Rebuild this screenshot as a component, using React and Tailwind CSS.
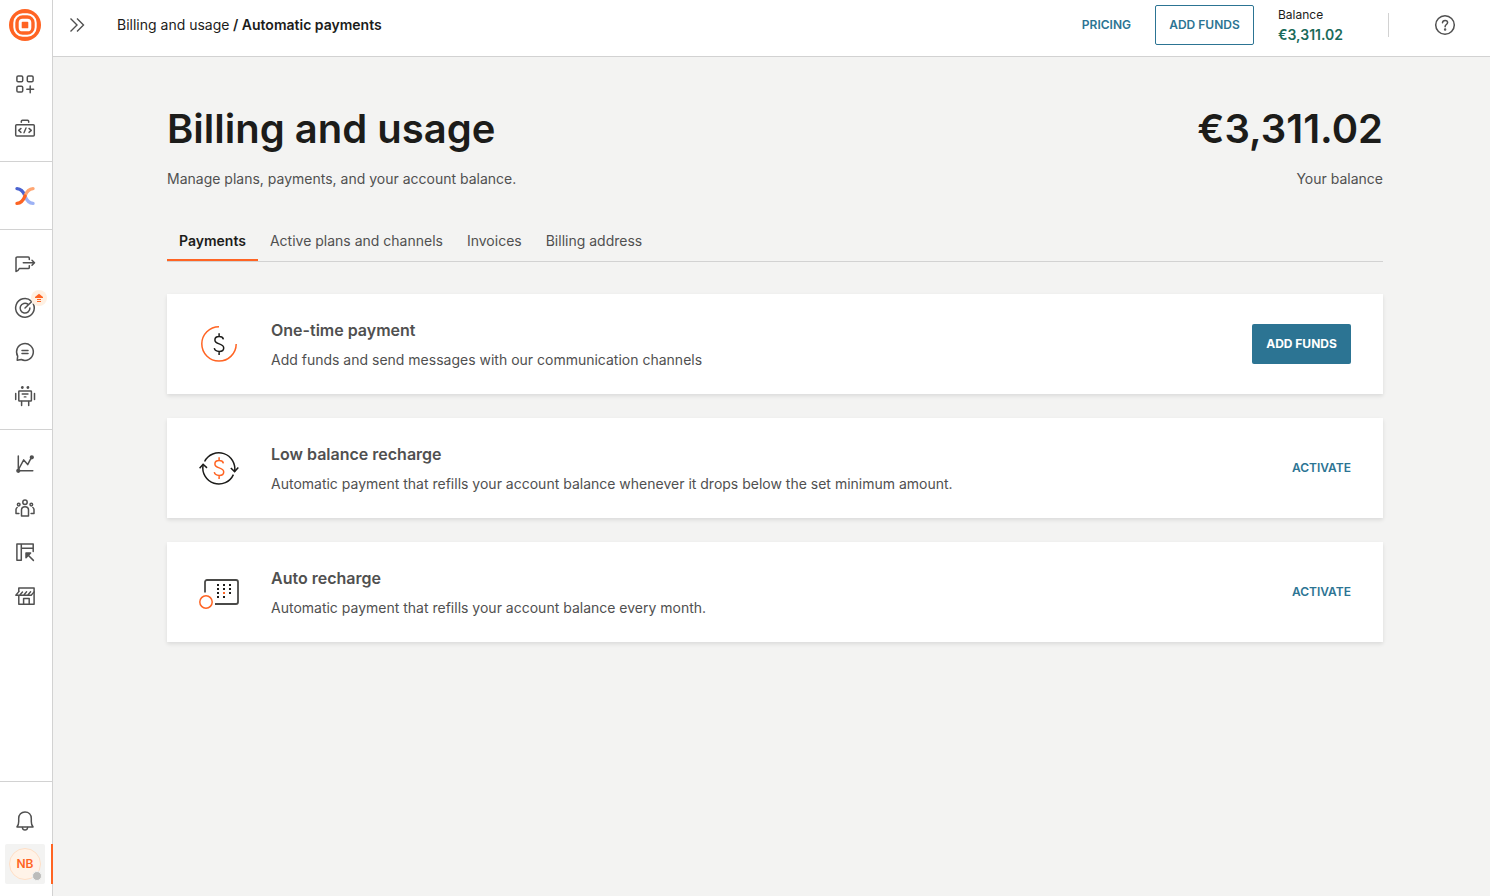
import { useState } from "react";

const Icon = ({ children }) => (
  <svg
    viewBox="0 0 24 24"
    className="w-6 h-6 shrink-0"
    fill="none"
    stroke="currentColor"
    strokeWidth="1.5"
    strokeLinecap="round"
    strokeLinejoin="round"
    aria-hidden="true"
  >
    {children}
  </svg>
);

const AppsIcon = () => (
  <Icon>
    <rect x="3.9" y="3.9" width="5.8" height="5.8" rx="1.3" />
    <rect x="14.3" y="3.9" width="5.8" height="5.8" rx="1.3" />
    <rect x="3.9" y="14.3" width="5.8" height="5.8" rx="1.3" />
    <path d="M17.2 13.9v6.8M13.8 17.3h6.8" />
  </Icon>
);

const DevToolsIcon = () => (
  <Icon>
    <rect x="2.7" y="8.7" width="18.6" height="11.4" rx="1" />
    <path d="M8.3 6.2V5.4c0-.7.4-1.1 1.1-1.1h5.2c.7 0 1.1.4 1.1 1.1v.8" />
    <path d="M8 12.4l-2.3 2 2.3 2M16 12.4l2.3 2-2.3 2M13 12l-2 4.8" strokeWidth="1.4" />
  </Icon>
);

const ExchangeIcon = () => (
  <svg viewBox="0 0 24 24" className="w-6 h-6" fill="none" strokeWidth="3.4" strokeLinecap="round" aria-hidden="true">
    <path d="M4 4.6c4.6.2 6.4 3 8 7.4" stroke="#4a63d0" />
    <path d="M12 12c1.6 4.4 3.4 7.2 8 7.4" stroke="#9db2f5" />
    <path d="M12 12c1.6-4.4 3.4-7.2 8-7.4" stroke="#ffa672" />
    <path d="M4 19.4c4.6-.2 6.4-3 8-7.4" stroke="#fc6423" />
  </svg>
);

const MomentsIcon = () => (
  <Icon>
    <path d="M16.3 7.6V6.2c0-.7-.4-1.1-1.1-1.1H4.2c-.7 0-1.2.4-1.2 1.1v13.2c1.5-.2 2.6-1.1 3.3-2.9h8.9c.7 0 1.1-.4 1.1-1.1v-1.6" />
    <path d="M10.3 10.8h11M19 8.3l2.5 2.5-2.5 2.5" />
  </Icon>
);

const TargetIcon = () => (
  <Icon>
    <path d="M18.3 5.1A9.3 9.3 0 1 0 20.3 7.8" />
    <path d="M14.9 8.2A4.9 4.9 0 1 0 16.9 12" />
    <path d="M12 12l6.6-6.3" />
  </Icon>
);

const ChatIcon = () => (
  <Icon>
    <path d="M4.2 20.2l.5-4a8.4 8.4 0 1 1 3.6 3.3z" />
    <path d="M9 10.6h6M9 13.4h6" />
  </Icon>
);

const RobotIcon = () => (
  <Icon>
    <rect x="5.8" y="7" width="12.6" height="10" rx=".6" />
    <path d="M8.6 17.5v4M15.7 17.5v4M2.7 9.5v6M21.5 9.5v6" />
    <path d="M9.2 10h5.8M11.3 12.9h1.6" strokeWidth="1.4" />
    <circle cx="9.3" cy="3.5" r=".7" fill="currentColor" />
    <circle cx="14.9" cy="3.5" r=".7" fill="currentColor" />
  </Icon>
);

const ChartIcon = () => (
  <Icon>
    <path d="M5.3 3.9v14.9h14.5M5.5 17.5l5.2-9.6 4 4.7 3.6-7" />
    <circle cx="5.3" cy="18.8" r="1.4" fill="currentColor" />
    <circle cx="18.8" cy="5.3" r="1.4" fill="currentColor" />
  </Icon>
);

const PeopleIcon = () => (
  <Icon>
    <circle cx="12" cy="6.2" r="2.2" />
    <path d="M8.5 20v-6c0-2.1 1.3-3.3 3.5-3.3s3.5 1.2 3.5 3.3v6z" />
    <circle cx="5.7" cy="8.6" r="1.3" />
    <circle cx="18.3" cy="8.6" r="1.3" />
    <path d="M5.9 17.4H3v-3.6c0-1 .3-1.7 1.1-2.3M18.1 17.4H21v-3.6c0-1-.3-1.7-1.1-2.3" />
  </Icon>
);

const BoardIcon = () => (
  <Icon>
    <path d="M3.9 3.9h16.3v7.7M3.9 3.9v16.3h4.4V3.9M8.3 8.3h11.9" />
    <path d="M15.5 15.5l4.9 4.9" />
    <path d="M13 13h4.6L13 17.6z" fill="currentColor" />
  </Icon>
);

const ShopIcon = () => (
  <Icon>
    <path d="M5.8 7.5V3.9h15.3v16.3H5.8v-8.4" />
    <path d="M10.6 20v-5.4h5.6V20" />
    <path
      d="M5.8 7.6l-3 3.7h3.8L9.5 8M6.6 11.3h4l3-3.5M10.6 11.3h4l3-3.5M14.6 11.3h3.6l2.9-3.4"
      strokeWidth="1.4"
    />
  </Icon>
);

const BellIcon = () => (
  <Icon>
    <path d="M4 18.9c1.3-1.3 1.7-3 1.7-5.5v-3C5.7 6.6 8.3 3.9 12 3.9s6.3 2.7 6.3 6.5v3c0 2.5.4 4.2 1.7 5.5z" />
    <path d="M9.4 19.5c.2 1.7 1.2 2.6 2.6 2.6s2.4-.9 2.6-2.6" />
  </Icon>
);

const Logo = () => (
  <svg viewBox="0 0 32 32" className="w-8 h-8" fill="none" aria-hidden="true">
    <circle cx="16" cy="16" r="16" fill="#ff6423" />
    <rect x="5.3" y="5.3" width="21.4" height="21.4" rx="8.4" stroke="#fff" strokeWidth="2" />
    <rect x="11.2" y="11.2" width="9.6" height="9.6" rx="2.4" stroke="#fff" strokeWidth="3" />
  </svg>
);

const Dollar = ({ color }) => (
  <path
    d="M24.4 15.3c-.4-1.7-2-2.7-4.3-2.7-2.5 0-4.2 1.3-4.2 3.4 0 2.4 2 3.2 4.3 3.9 2.5.8 4.5 1.6 4.5 4 0 2.2-1.9 3.5-4.5 3.5-2.7 0-4.5-1.2-4.9-3.2M20.1 9.3v3.3M20.1 27.4v3.5"
    stroke={color}
  />
);

const CardIcon = ({ children }) => (
  <svg viewBox="0 0 40 40" className="w-10 h-10 shrink-0" fill="none" strokeWidth="1.5" aria-hidden="true">
    {children}
  </svg>
);

const OneTimeIcon = () => (
  <CardIcon>
    <path d="M20 2.7A17.2 17.2 0 1 0 37.2 20" stroke="#ff6423" />
    <Dollar color="#1c1c1a" />
  </CardIcon>
);

const RechargeIcon = () => (
  <CardIcon>
    <g stroke="#1c1c1a">
      <path d="M5.6 13.5A16 16 0 0 1 35.6 23.5M34.4 26.6A16 16 0 0 1 4.1 17" />
      <path d="M.6 20.3l3.5-4 3.9 3.6M31.8 20l3.8 3.6 3.7-4" />
    </g>
    <Dollar color="#ff6423" />
  </CardIcon>
);

const calendarDots = [
  [18, 12], [24, 12], [30, 12],
  [18, 16], [24, 16], [30, 16],
  [18, 20], [24, 20], [30, 20],
  [18, 24], [24, 24],
];

const CalendarIcon = () => (
  <CardIcon>
    <path d="M6 20.5V10a2 2 0 0 1 2-2h29a2 2 0 0 1 2 2v20a2 2 0 0 1-2 2H16" stroke="#4a4a48" strokeWidth="1.8" />
    <circle cx="7" cy="30" r="6.2" stroke="#ff6423" />
    {calendarDots.map(([x, y]) => (
      <rect key={`${x}-${y}`} x={x} y={y} width="2" height="2" fill={x === 24 && y === 20 ? "#ff6423" : "#1c1c1a"} />
    ))}
  </CardIcon>
);

const UpgradeBadge = () => (
  <span className="absolute left-[26px] top-[2px] w-4 h-4 rounded-full bg-[#fff0e2]">
    <svg viewBox="0 0 16 16" className="w-4 h-4" fill="#ff6423" aria-hidden="true">
      <path d="M8 3.8l4 3.2v1H4V7z" />
      <path d="M6 9h4v1H6zM6 11h4v1H6z" />
    </svg>
  </span>
);

const navGroups = [
  [
    { label: "Apps", icon: AppsIcon },
    { label: "Developer tools", icon: DevToolsIcon },
  ],
  [{ label: "Exchange", icon: ExchangeIcon }],
  [
    { label: "Moments", icon: MomentsIcon },
    { label: "Target", icon: TargetIcon, badge: true },
    { label: "Conversations", icon: ChatIcon },
    { label: "Answers", icon: RobotIcon },
  ],
  [
    { label: "Analyze", icon: ChartIcon },
    { label: "People", icon: PeopleIcon },
    { label: "Channels", icon: BoardIcon },
    { label: "Shop", icon: ShopIcon },
  ],
];

const tabs = ["Payments", "Active plans and channels", "Invoices", "Billing address"];

const options = [
  {
    title: "One-time payment",
    text: "Add funds and send messages with our communication channels",
    icon: OneTimeIcon,
    action: "ADD FUNDS",
    primary: true,
  },
  {
    title: "Low balance recharge",
    text: "Automatic payment that refills your account balance whenever it drops below the set minimum amount.",
    icon: RechargeIcon,
    action: "ACTIVATE",
  },
  {
    title: "Auto recharge",
    text: "Automatic payment that refills your account balance every month.",
    icon: CalendarIcon,
    action: "ACTIVATE",
  },
];

function Sidebar() {
  return (
    <aside className="w-[53px] shrink-0 flex flex-col bg-white border-r border-[#d2d2d2] text-[#505050]">
      <a href="#home" aria-label="Home" className="pl-[9px] pt-[9px] pb-[9px]">
        <Logo />
      </a>

      <nav>
        {navGroups.map((group, i) => (
          <div
            key={i}
            className="flex flex-col gap-1 pl-[5px] pt-[14px] pb-[13px] border-b border-[#d2d2d2] last:border-b-0"
          >
            {group.map(({ label, icon: NavIcon, badge }) => (
              <a
                key={label}
                href="#nav"
                aria-label={label}
                className="relative w-10 h-10 flex items-center justify-center"
              >
                <NavIcon />
                {badge && <UpgradeBadge />}
              </a>
            ))}
          </div>
        ))}
      </nav>

      <div className="mt-auto flex flex-col gap-1 pl-[5px] pt-[18px] pb-3 border-t border-[#d2d2d2]">
        <button aria-label="Notifications" className="w-10 h-10 flex items-center justify-center">
          <BellIcon />
        </button>
        <div className="relative">
          <button aria-label="Account" className="relative w-10 h-10 flex items-center justify-center bg-[#f3f3f2] rounded-xs">
            <span className="w-8 h-8 flex items-center justify-center rounded-full bg-[#fff3e8] border border-[#ffdfc6] text-xs font-semibold text-[#ff6423]">
              NB
            </span>
            <span className="absolute right-[3px] bottom-[3px] w-[10px] h-[10px] rounded-full bg-[#bcbcba] border border-[#f3f3f2]"></span>
          </button>
          {/* active marker sits over the sidebar border */}
          <span className="absolute -right-px top-0 w-[2px] h-10 bg-[#ff6423]"></span>
        </div>
      </div>
    </aside>
  );
}

function Header() {
  return (
    <header className="h-[57px] shrink-0 flex items-center pl-3 pr-[25px] pb-[6px] bg-white border-b border-[#d2d2d2]">
      <button aria-label="Expand menu" className="w-6 h-6 text-[#505050]">
        <svg viewBox="0 0 24 24" className="w-6 h-6" fill="none" stroke="currentColor" strokeWidth="1.4" aria-hidden="true">
          <path d="M5.5 5.5L12 12l-6.5 6.5M12 5.5l6.5 6.5-6.5 6.5" />
        </svg>
      </button>
      <div className="pl-7 text-sm">
        <a href="#billing">Billing and usage</a>
        <span className="font-semibold"> / Automatic payments</span>
      </div>

      <div className="ml-auto flex items-center">
        <a href="#pricing" className="text-xs font-semibold text-[#2c7493]">PRICING</a>
        <button className="ml-6 w-[99px] h-10 border border-[#2c7493] rounded-xs text-xs font-semibold text-[#2c7493]">
          ADD FUNDS
        </button>
        <div className="ml-6 w-[110px] flex flex-col">
          <span className="text-xs leading-5">Balance</span>
          <span className="text-sm leading-5 font-semibold text-[#1b6b5a]">€3,311.02</span>
        </div>
        <span className="w-px h-6 bg-[#d2d2d2]"></span>
        <button aria-label="Help" className="ml-9 w-10 h-10 flex items-center justify-center text-[#505050]">
          <Icon>
            <circle cx="12" cy="12" r="9.3" />
            <path d="M9.5 9.8c.1-1.5 1.1-2.4 2.6-2.4s2.5.9 2.5 2.2c0 1.9-2.5 2-2.5 4.1" />
            <circle cx="12.1" cy="16.6" r=".5" fill="currentColor" />
          </Icon>
        </button>
      </div>
    </header>
  );
}

function PaymentCard({ option }) {
  const { title, text, icon: OptionIcon, action, primary } = option;

  return (
    <section className="flex items-center gap-8 min-h-[100px] px-8 bg-white shadow-[0_2px_4px_rgba(0,0,0,0.1)]">
      <OptionIcon />
      <div className="flex-1 flex flex-col gap-2 text-[#505050]">
        <h2 className="text-base leading-6 font-semibold">{title}</h2>
        <p className="text-sm leading-5">{text}</p>
      </div>
      {primary ? (
        <button className="w-[99px] h-10 rounded-xs bg-[#2c7493] text-xs font-bold text-white">{action}</button>
      ) : (
        <button className="h-10 text-xs font-semibold text-[#2c7493]">{action}</button>
      )}
    </section>
  );
}

function App() {
  const [activeTab, setActiveTab] = useState("Payments");

  return (
    <div className="min-h-screen flex bg-[#f3f3f2] font-[Inter,sans-serif] text-[#1c1c1a]">
      <Sidebar />
      <div className="flex-1 min-w-0 flex flex-col">
        <Header />
        <main className="flex-1 pl-[7px]">
          <div className="max-w-[1216px] mx-auto pt-12">
            <div className="flex justify-between">
              <div>
                <h1 className="text-[40px] leading-12 font-semibold">Billing and usage</h1>
                <p className="mt-4 text-sm leading-5 text-[#505050]">Manage plans, payments, and your account balance.</p>
              </div>
              <div className="text-right">
                <p className="text-[40px] leading-12 font-semibold">€3,311.02</p>
                <p className="mt-4 text-sm leading-5 text-[#505050]">Your balance</p>
              </div>
            </div>

            <div role="tablist" className="mt-[34px] flex border-b border-[#d2d2d2]">
              {tabs.map((tab) => (
                <button
                  key={tab}
                  role="tab"
                  aria-selected={tab === activeTab}
                  onClick={() => setActiveTab(tab)}
                  className={
                    tab === activeTab
                      ? "h-[38px] px-3 text-sm font-semibold border-b-2 border-[#ff6423]"
                      : "h-[38px] px-3 text-sm text-[#505050] border-b-2 border-transparent"
                  }
                >
                  {tab}
                </button>
              ))}
            </div>

            <div className="mt-8 flex flex-col gap-6">
              {options.map((option) => (
                <PaymentCard key={option.title} option={option} />
              ))}
            </div>
          </div>
        </main>
      </div>
    </div>
  );
}

export default App;
